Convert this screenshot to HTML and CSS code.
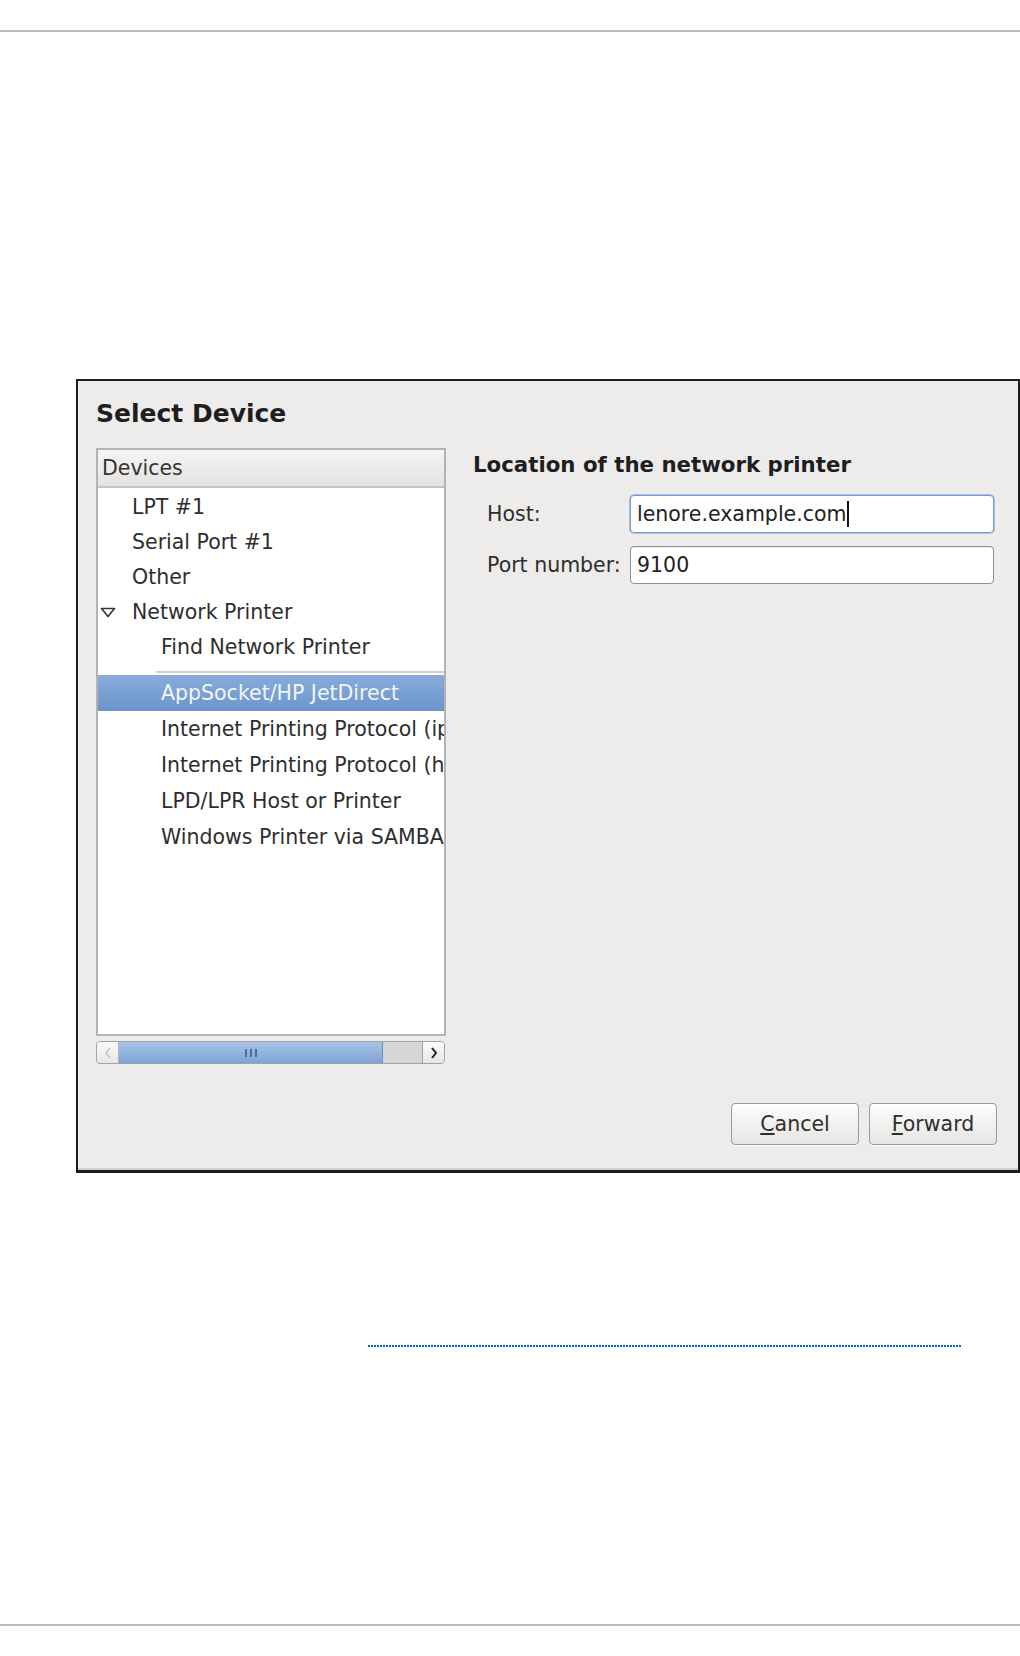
FILE: index.html
```html
<!DOCTYPE html>
<html lang="en">
<head>
    <meta charset="UTF-8">
    <meta name="viewport" content="width=device-width, initial-scale=1.0">
    <title>Select Device</title>
    <link rel="stylesheet" href="styles.css">
</head>
<body>
    <div class="rule top-rule"></div>

    <div class="dialog">
        <h1 class="dialog-title">Select Device</h1>

        <div class="dialog-body">
            <!-- left: device tree -->
            <div class="device-col">
                <div class="device-panel">
                    <div class="panel-header">Devices</div>
                    <ul class="device-list">
                        <li class="item">LPT #1</li>
                        <li class="item">Serial Port #1</li>
                        <li class="item">Other</li>
                        <li class="item expander">
                            <svg class="tri" width="16" height="11" viewBox="0 0 16 11">
                                <path d="M1.5 1.5 L14.5 1.5 L8 9.5 Z" fill="none" stroke="#333" stroke-width="1.6" stroke-linejoin="round"/>
                            </svg>
                            Network Printer
                        </li>
                        <li class="item sub">Find Network Printer</li>
                        <li class="separator"><span></span></li>
                        <li class="item sub tall selected">AppSocket/HP JetDirect</li>
                        <li class="item sub tall">Internet Printing Protocol (ipp)</li>
                        <li class="item sub tall">Internet Printing Protocol (https)</li>
                        <li class="item sub tall">LPD/LPR Host or Printer</li>
                        <li class="item sub tall">Windows Printer via SAMBA</li>
                    </ul>
                </div>

                <div class="hscroll">
                    <div class="scroll-btn left">
                        <svg width="8" height="12" viewBox="0 0 8 12"><path d="M6 1 L2 6 L6 11" fill="none" stroke="#c4c4c4" stroke-width="1.6"/></svg>
                    </div>
                    <div class="scroll-thumb">
                        <span class="grip"></span><span class="grip"></span><span class="grip"></span>
                    </div>
                    <div class="scroll-trough"></div>
                    <div class="scroll-btn right">
                        <svg width="8" height="12" viewBox="0 0 8 12"><path d="M2 1 L6 6 L2 11" fill="none" stroke="#222" stroke-width="2"/></svg>
                    </div>
                </div>
            </div>

            <!-- right: location form -->
            <div class="location-col">
                <h2 class="section-title">Location of the network printer</h2>
                <div class="form-grid">
                    <label class="field-label">Host:</label>
                    <div class="field focused">lenore.example.com<span class="caret"></span></div>

                    <label class="field-label">Port number:</label>
                    <div class="field">9100</div>
                </div>
            </div>
        </div>

        <div class="dialog-buttons">
            <button class="btn"><u>C</u>ancel</button>
            <button class="btn"><u>F</u>orward</button>
        </div>
    </div>

    <div class="dotted-link"></div>

    <div class="rule bottom-rule"></div>
</body>
</html>
```

FILE: styles.css
```css
body {
    margin: 0;
    padding: 0;
    width: 1020px;
    font-family: "DejaVu Sans", "Liberation Sans", sans-serif;
    color: #2e2e2e;
    background: #fff;
}

.rule {
    height: 2px;
    background-color: #bbbbbb;
}

.top-rule {
    margin-top: 30px;
}

.bottom-rule {
    margin-top: 277px;
}

/* dialog window */
.dialog {
    box-sizing: border-box;
    width: 944px;
    height: 794px;
    margin: 347px 0 0 76px;
    padding: 18px 21px 25px 18px;
    border: 2px solid #1c1c1c;
    border-bottom-width: 3px;
    background-color: #edeceb;
    box-shadow: inset 0 -2px 0 #d4d3d1;
    display: flex;
    flex-direction: column;
}

.dialog-title {
    margin: 0;
    font-size: 25px;
    line-height: 30px;
    font-weight: bold;
    color: #1e1e1e;
}

.dialog-body {
    display: flex;
    margin-top: 19px;
}

.device-col {
    width: 350px;
    display: flex;
    flex-direction: column;
}

.device-panel {
    box-sizing: border-box;
    height: 588px;
    border: 2px solid #b3b3b3;
    background-color: #fff;
    overflow: hidden;
}

.panel-header {
    height: 36px;
    line-height: 36px;
    padding-left: 4px;
    font-size: 20.5px;
    color: #333;
    background: linear-gradient(#f5f5f4, #e4e3e1);
    border-bottom: 2px solid #c4c4c4;
}

.device-list {
    list-style: none;
    margin: 0;
    padding: 2px 0 0 0;
}

.item {
    position: relative;
    height: 35px;
    line-height: 35px;
    padding-left: 34px;
    font-size: 20.5px;
    white-space: nowrap;
    overflow: hidden;
    color: #2e2e2e;
}

.item.sub {
    padding-left: 63px;
}

.item.tall {
    height: 36px;
    line-height: 36px;
}

.tri {
    position: absolute;
    left: 2px;
    top: 12px;
}

.separator {
    height: 10px;
    padding-top: 6px;
    box-sizing: border-box;
}

.separator span {
    display: block;
    margin-left: 58px;
    border-top: 2px solid #cfcfcf;
}

.item.selected {
    color: #f2f5fa;
    background: linear-gradient(#88acda, #6b95cd);
}

/* horizontal scrollbar */
.hscroll {
    box-sizing: border-box;
    display: flex;
    height: 23px;
    margin-top: 5px;
    width: 349px;
    border: 1px solid #a3a3a3;
    border-radius: 4px;
    background-color: #d6d6d5;
    overflow: hidden;
}

.scroll-btn {
    width: 21px;
    display: flex;
    align-items: center;
    justify-content: center;
    background: linear-gradient(#fbfbfb, #e6e6e5);
}

.scroll-btn.left {
    border-right: 1px solid #b5b5b5;
}

.scroll-btn.right {
    border-left: 1px solid #a0a0a0;
}

.scroll-thumb {
    box-sizing: border-box;
    width: 264px;
    display: flex;
    align-items: center;
    justify-content: center;
    gap: 3px;
    background: linear-gradient(#a9c5e8, #7fa3d6);
    border-right: 1px solid #6b8ec3;
}

.grip {
    width: 2px;
    height: 8px;
    background-color: #4d6c9c;
}

.scroll-trough {
    flex: 1;
}

/* right side */
.location-col {
    flex: 1;
    padding-left: 27px;
}

.section-title {
    margin: 4px 0 0 0;
    font-size: 21.3px;
    line-height: 26px;
    font-weight: bold;
    color: #1e1e1e;
}

.form-grid {
    display: grid;
    grid-template-columns: 143px 364px;
    grid-auto-rows: 38px;
    row-gap: 13px;
    align-items: center;
    margin: 17px 0 0 14px;
}

.field-label {
    font-size: 20.5px;
    color: #2e2e2e;
}

.field {
    box-sizing: border-box;
    height: 38px;
    line-height: 36px;
    padding-left: 6px;
    font-size: 20.5px;
    color: #222;
    background-color: #fff;
    border: 1px solid #8f8f8f;
    border-radius: 4px;
    box-shadow: inset 0 1px 1px rgba(0, 0, 0, 0.08);
}

.field.focused {
    border-color: #7c9cc8;
    box-shadow: 0 0 0 1px #a9c0e0;
}

.caret {
    display: inline-block;
    width: 2px;
    height: 26px;
    margin-left: 1px;
    vertical-align: -6px;
    background-color: #111;
}

/* buttons */
.dialog-buttons {
    margin-top: auto;
    display: flex;
    justify-content: flex-end;
    gap: 10px;
}

.btn {
    box-sizing: border-box;
    width: 128px;
    height: 42px;
    font-family: "DejaVu Sans", "Liberation Sans", sans-serif;
    font-size: 20.5px;
    color: #2e2e2e;
    background: linear-gradient(#fdfdfd, #e6e5e3);
    border: 1px solid #9a9a9a;
    border-radius: 4px;
    box-shadow: 0 1px 0 rgba(255, 255, 255, 0.8);
    padding: 0;
}

/* empty dotted link below the figure */
.dotted-link {
    width: 594px;
    height: 2px;
    margin: 172px 0 0 368px;
    background: repeating-linear-gradient(90deg, #0066cc 0 2px, transparent 2px 3px);
}
```
